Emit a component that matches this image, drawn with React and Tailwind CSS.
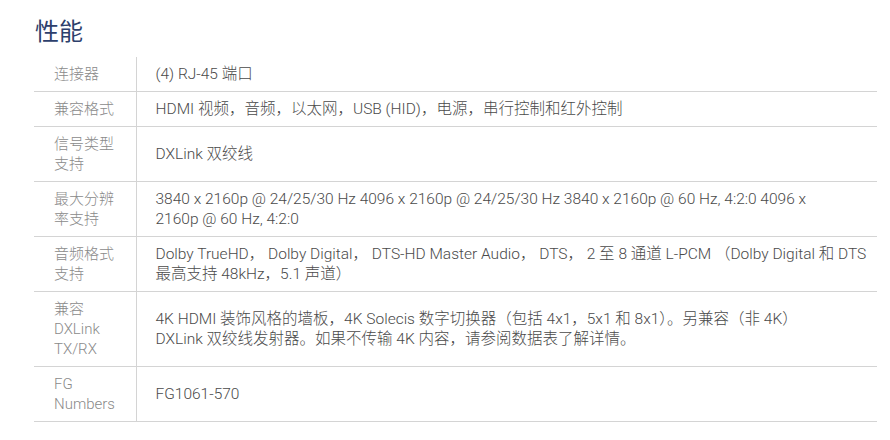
const rows = [
  { label: '连接器', value: ['(4) RJ-45 端口'] },
  { label: '兼容格式', value: ['HDMI 视频，音频，以太网，USB (HID)，电源，串行控制和红外控制'] },
  { label: '信号类型支持', value: ['DXLink 双绞线'] },
  {
    label: '最大分辨率支持',
    value: ['3840 x 2160p @ 24/25/30 Hz 4096 x 2160p @ 24/25/30 Hz 3840 x 2160p @ 60 Hz, 4:2:0 4096 x', '2160p @ 60 Hz, 4:2:0'],
  },
  {
    label: '音频格式支持',
    value: ['Dolby TrueHD， Dolby Digital， DTS-HD Master Audio， DTS， 2 至 8 通道 L-PCM （Dolby Digital 和 DTS', '最高支持 48kHz，5.1 声道）'],
  },
  {
    label: '兼容 DXLink TX/RX',
    value: ['4K HDMI 装饰风格的墙板，4K Solecis 数字切换器（包括 4x1，5x1 和 8x1）。另兼容（非 4K）', 'DXLink 双绞线发射器。如果不传输 4K 内容，请参阅数据表了解详情。'],
  },
  { label: 'FG Numbers', value: ['FG1061-570'] },
];

export default function App() {
  return (
    <div className="w-[890px] h-[440px] bg-white pl-[34px] pr-[13px] pt-[16px] font-['Roboto','Noto_Sans_CJK_SC',sans-serif]">
      <h2 className="text-[24px] leading-[32px] text-[#2d3f6c] pl-px mb-[9px]">性能</h2>
      <table className="w-full border-collapse leading-[20px] font-light">
        <tbody>
          {rows.map((r, i) => (
            <tr key={i} className="border-b border-[#d4d4d4]">
              <td className="w-[102px] pl-[20px] pr-[14px] py-[7px] align-middle text-[15px] text-[#8a8a8a] border-r border-[#d4d4d4]">
                {r.label}
              </td>
              <td className="pl-[19px] pr-[4px] py-[7px] align-middle text-[15.5px] text-[#4a4a4a]">
                {r.value.map((line, j) => (
                  <div key={j} className="whitespace-nowrap">{line}</div>
                ))}
              </td>
            </tr>
          ))}
        </tbody>
      </table>
    </div>
  );
}
